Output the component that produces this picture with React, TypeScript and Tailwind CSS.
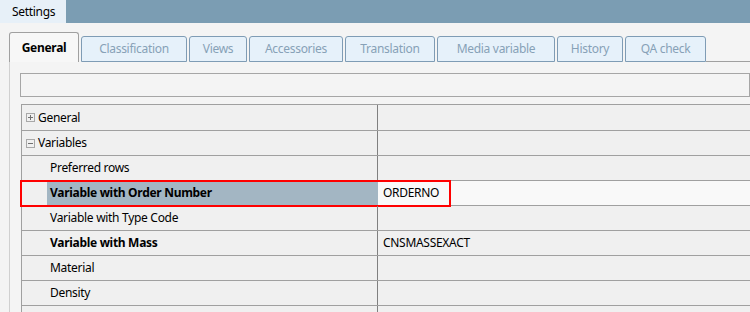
import React from "react";

const tabs = [
  { label: "Classification", w: "w-[106px]" },
  { label: "Views", w: "w-[58px]" },
  { label: "Accessories", w: "w-[94px]" },
  { label: "Translation", w: "w-[90px]" },
  { label: "Media variable", w: "w-[118px]" },
  { label: "History", w: "w-[66px]" },
  { label: "QA check", w: "w-[81px]" },
];

const rows = [
  { label: "Preferred rows", bold: false, value: "" },
  { label: "Variable with Order Number", bold: true, value: "ORDERNO", selected: true },
  { label: "Variable with Type Code", bold: false, value: "" },
  { label: "Variable with Mass", bold: true, value: "CNSMASSEXACT" },
  { label: "Material", bold: false, value: "" },
  { label: "Density", bold: false, value: "" },
  { label: "", bold: false, value: "" },
];

const Expander = ({ open }: { open: boolean }) => (
  <svg width="9" height="9" viewBox="0 0 9 9" className="mr-[3px] shrink-0">
    <rect x="0.5" y="0.5" width="8" height="8" fill="none" stroke="#a8a8a8" />
    <line x1="2" y1="4.5" x2="7" y2="4.5" stroke="#707070" />
    {!open && <line x1="4.5" y1="2" x2="4.5" y2="7" stroke="#707070" />}
  </svg>
);

export default function App() {
  return (
    <div className="w-[750px] h-[312px] overflow-hidden bg-[#f4f4f4] text-[12px] tracking-[-0.3px] text-black font-['Noto_Sans',sans-serif]">
      {/* title strip */}
      <div className="flex h-[23px] bg-[#7b9db3]">
        <div className="w-[66px] bg-[#e7f0f8] pl-[12px] flex items-center">Settings</div>
      </div>

      {/* tab headers */}
      <div className="flex items-end h-[39px] pl-[9px]">
        <div className="w-[70px] h-[30px] flex items-center justify-center font-bold bg-[#f7f7f7] border border-b-0 border-[#a0a0a0] rounded-t-[3px]">
          General
        </div>
        {tabs.map((t, i) => (
          <div
            key={i}
            className={`${t.w} h-[26px] ml-[2px] flex items-center justify-center text-[#87a1b7] bg-[#e6f1fa] border border-[#7f9cb5] rounded-t-[3px]`}
          >
            {t.label}
          </div>
        ))}
        <div className="flex-1 border-b border-[#a0a0a0]" />
      </div>

      {/* tab page */}
      <div className="ml-[9px] border-l border-[#d0d0d0] pl-[10px] pt-[11px] h-[250px]">
        <div className="h-[24px] border border-[#a6a6a6] bg-[#f4f4f4]" />

        <div className="mt-[7px] ml-[1px] border-l border-t border-[#a0a0a0] bg-[#f0f0f0]">
          <div className="flex h-[26px] border-b border-[#a0a0a0]">
            <div className="w-[356px] flex items-center pl-[4px] border-r border-[#808080]">
              <Expander open={false} />
              General
            </div>
            <div className="flex-1" />
          </div>
          <div className="flex h-[25px] border-b border-[#a0a0a0]">
            <div className="w-[356px] flex items-center pl-[4px] border-r border-[#808080]">
              <Expander open={true} />
              Variables
            </div>
            <div className="flex-1" />
          </div>
          {rows.map((r, i) => (
            <div key={i} className="relative flex h-[25px] border-b border-[#a0a0a0]">
              <div className="w-[25px] shrink-0" />
              <div
                className={`w-[331px] flex items-center pl-[3px] border-r ${
                  r.selected ? "bg-[#a3b6c3] border-[#a3b6c3]" : "border-[#808080]"
                } ${r.bold ? "font-bold" : ""}`}
              >
                {r.label}
              </div>
              <div className={`flex-1 flex items-center pl-[5px] ${r.selected ? "bg-[#f9f9f9]" : ""}`}>
                {r.value}
              </div>
              {r.selected && (
                <div className="absolute left-[-2px] top-[-1px] w-[431px] h-[27px] border-2 border-[#ff0000] pointer-events-none" />
              )}
            </div>
          ))}
        </div>
      </div>
    </div>
  );
}
